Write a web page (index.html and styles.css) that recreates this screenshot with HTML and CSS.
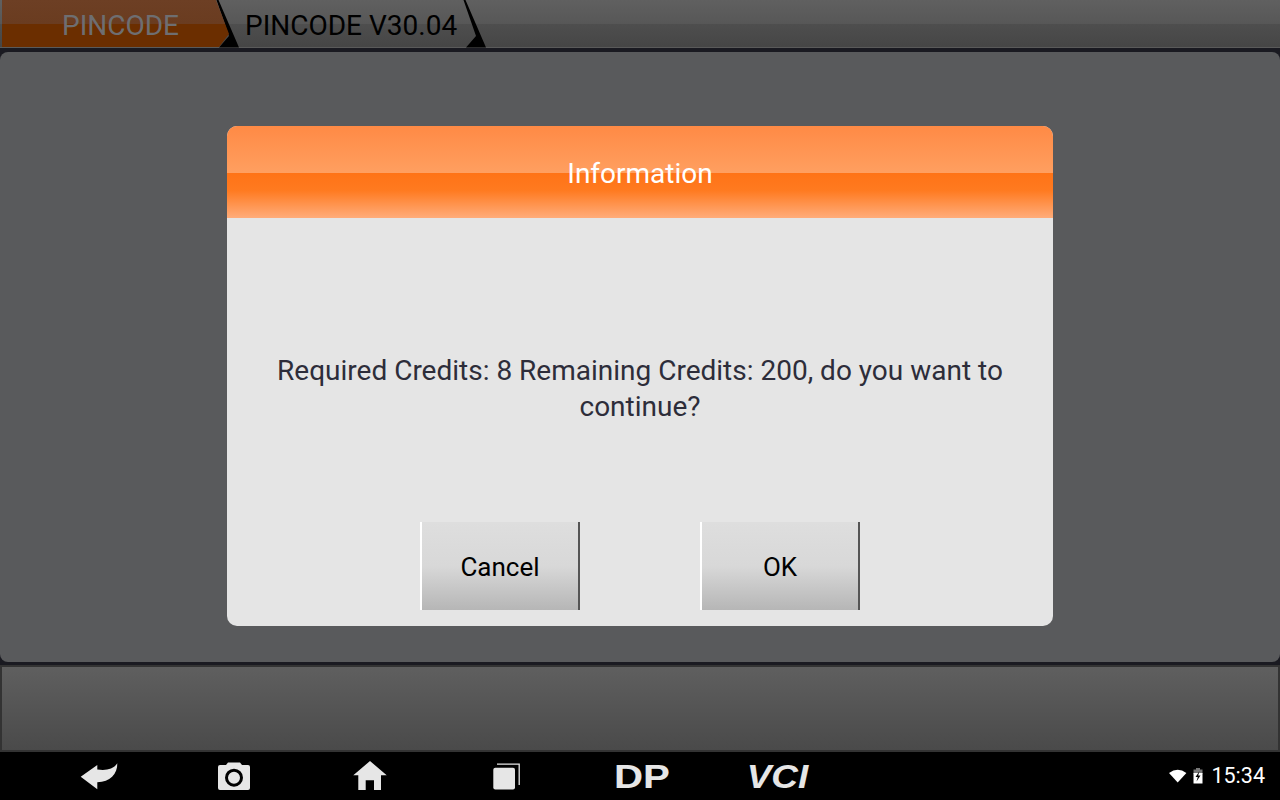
FILE: index.html
```html
<!DOCTYPE html>
<html lang="en">
<head>
  <meta charset="UTF-8">
  <meta name="viewport" content="width=device-width, initial-scale=1.0">
  <title>PINCODE</title>
  <link rel="stylesheet" href="styles.css">
</head>
<body>
  <div class="app">
    <div class="tabs">
      <div class="tab tab-first">PINCODE</div>
      <svg class="tab-sep" width="24" height="48" viewBox="0 0 24 48">
        <path d="M0 0 L2.5 0 L23 47.5 L3 47.5 L13 36 L0.5 0 Z" fill="#000"/>
      </svg>
      <div class="tab tab-second">PINCODE V30.04</div>
      <svg class="tab-sep" width="24" height="48" viewBox="0 0 24 48">
        <path d="M0 0 L2.5 0 L23 47.5 L3 47.5 L13 36 L0.5 0 Z" fill="#000"/>
      </svg>
    </div>
    <div class="main"></div>
    <div class="footer"></div>
  </div>

  <div class="overlay">
    <div class="dialog">
      <div class="dialog-title">Information</div>
      <div class="dialog-body">
        <p>Required Credits: 8 Remaining Credits: 200, do you want to continue?</p>
      </div>
      <div class="dialog-buttons">
        <button class="btn">Cancel</button>
        <button class="btn">OK</button>
      </div>
    </div>
  </div>

  <div class="nav">
    <div class="nav-item nav-nudge">
      <svg width="38" height="28" viewBox="0 0 38 28">
        <path d="M.7 14.7 L17.3 3 V7.5 C25 8.5 33 8 37.3 1.3 C37.5 12 30 20 17.3 20.3 V27.3 Z" fill="#e6e6e6"/>
      </svg>
    </div>
    <div class="nav-item">
      <svg width="32" height="28" viewBox="0 0 32 28">
        <path d="M2 3 H8 L10 0.5 H22 L24 3 H30 Q32 3 32 5 V26 Q32 28 30 28 H2 Q0 28 0 26 V5 Q0 3 2 3 Z" fill="#e6e6e6"/>
        <circle cx="16" cy="15.7" r="7.5" fill="#e6e6e6" stroke="#000" stroke-width="3"/>
      </svg>
    </div>
    <div class="nav-item">
      <svg width="34" height="30" viewBox="0 0 34 30">
        <path d="M17 0 L33.7 14.3 H28 V29 H21 V19.3 H12.7 V29 H5.3 V14.3 H.3 Z" fill="#e6e6e6"/>
      </svg>
    </div>
    <div class="nav-item nav-nudge">
      <svg width="28" height="27" viewBox="0 0 28 27">
        <rect x="0.3" y="4.7" width="21.7" height="21.7" rx="2" fill="#e6e6e6"/>
        <path d="M4 1.2 H26.2 V22" fill="none" stroke="#e6e6e6" stroke-width="1.3"/>
      </svg>
    </div>
    <div class="nav-item"><span class="logo logo-dp">DP</span></div>
    <div class="nav-item"><span class="logo logo-vci">VCI</span></div>
    <div class="status">
      <svg class="wifi" width="18" height="14" viewBox="0 0 18 14">
        <path d="M0 4 Q8.7 -2.5 17.4 4 L8.7 13.5 Z" fill="#fff"/>
      </svg>
      <svg class="battery" width="10" height="16" viewBox="0 0 10 16">
        <path d="M3 0 H7 V1.5 H9.5 V6 H.5 V1.5 H3 Z" fill="#777"/>
        <rect x="0.5" y="5" width="9" height="10.5" fill="#fff"/>
        <path d="M6.5 3 L2.5 9 H4.8 L3.5 13.5 L7.5 7.5 H5.2 Z" fill="#000"/>
      </svg>
      <span class="time">15:34</span>
    </div>
  </div>
</body>
</html>
```

FILE: styles.css
```css
* {
  box-sizing: border-box;
}

html, body {
  height: 100%;
}

body {
  margin: 0;
  width: 1280px;
  height: 800px;
  overflow: hidden;
  position: relative;
  display: flex;
  flex-direction: column;
  font-family: Roboto, "Liberation Sans", sans-serif;
  background: #000;
}

.app {
  height: 752px;
  display: flex;
  flex-direction: column;
  background: #1a1a21;
}

/* top tabs */
.tabs {
  height: 48px;
  display: flex;
  margin-bottom: 4px;
  background: linear-gradient(#606060 0, #575757 50%, #4e4e4e 50%, #464646 97%, #5a5a5a 97%);
}

.tab {
  height: 47px;
  line-height: 51px;
  font-size: 28px;
  white-space: nowrap;
}

.tab-first {
  width: 229px;
  padding-left: 62px;
  color: #6e6e71;
  background: linear-gradient(#6d3f24 0, #6a3c20 50%, #6b2e00 50%, #6b2e00 100%);
  clip-path: polygon(2px 0, 216px 0, 229px 34px, 219px 47px, 2px 47px);
}

.tab-second {
  width: 223px;
  padding-left: 5px;
  color: #000;
}

.tab-sep {
  flex-shrink: 0;
}

.tab-first + .tab-sep {
  margin-left: -13px;
}

.main {
  height: 610px;
  background: #595a5c;
  border-radius: 8px;
  margin-bottom: 3px;
}

.footer {
  height: 87px;
  background: linear-gradient(#5f5f5f, #4a4a4a);
  border: 2px solid #333;
}

/* dialog */
.overlay {
  position: absolute;
  left: 0;
  top: 0;
  width: 1280px;
  height: 752px;
  display: flex;
  align-items: center;
  justify-content: center;
}

.dialog {
  width: 826px;
  height: 500px;
  background: #e5e5e5;
  border-radius: 10px;
  overflow: hidden;
  display: flex;
  flex-direction: column;
}

.dialog-title {
  height: 92px;
  line-height: 95px;
  text-align: center;
  color: #fff;
  font-size: 28px;
  background: linear-gradient(#ff8a45 0, #ff9f60 51%, #ff7316 51%, #ff7a20 70%, #ffac7a 100%);
}

.dialog-body {
  height: 304px;
  padding: 38px 40px 0;
  display: flex;
  align-items: center;
  justify-content: center;
  text-align: center;
  color: #2d2d3a;
  font-size: 28px;
  line-height: 36px;
}

.dialog-body p {
  margin: 0;
}

.dialog-buttons {
  display: flex;
  justify-content: center;
  gap: 120px;
}

.btn {
  width: 160px;
  height: 88px;
  padding: 2px 0 0;
  border: none;
  border-left: 2px solid #fff;
  border-right: 2px solid #555;
  border-radius: 0;
  background: linear-gradient(#dedede 0, #d8d8d8 50%, #b6b6b6 100%);
  color: #000;
  font-family: inherit;
  font-size: 26px;
}

/* bottom nav */
.nav {
  height: 48px;
  display: flex;
  align-items: center;
  padding-left: 30px;
  background: #000;
}

.nav-item {
  width: 136px;
  display: flex;
  justify-content: center;
  flex-shrink: 0;
}

.nav-nudge {
  padding-left: 2px;
}

.logo {
  display: inline-block;
  color: #e6e6e6;
  font-family: "Liberation Sans", sans-serif;
  font-weight: 700;
  line-height: 1;
}

.logo-dp {
  font-size: 33px;
  transform: scaleX(1.22);
}

.logo-vci {
  font-size: 33px;
  font-style: italic;
  transform: scaleX(1.12);
}

.status {
  margin-left: auto;
  padding-right: 15px;
  display: flex;
  align-items: center;
  color: #fff;
}

.wifi {
  margin-right: 6px;
}

.battery {
  margin-right: 8px;
}

.time {
  font-size: 21.5px;
  line-height: 48px;
}
```
